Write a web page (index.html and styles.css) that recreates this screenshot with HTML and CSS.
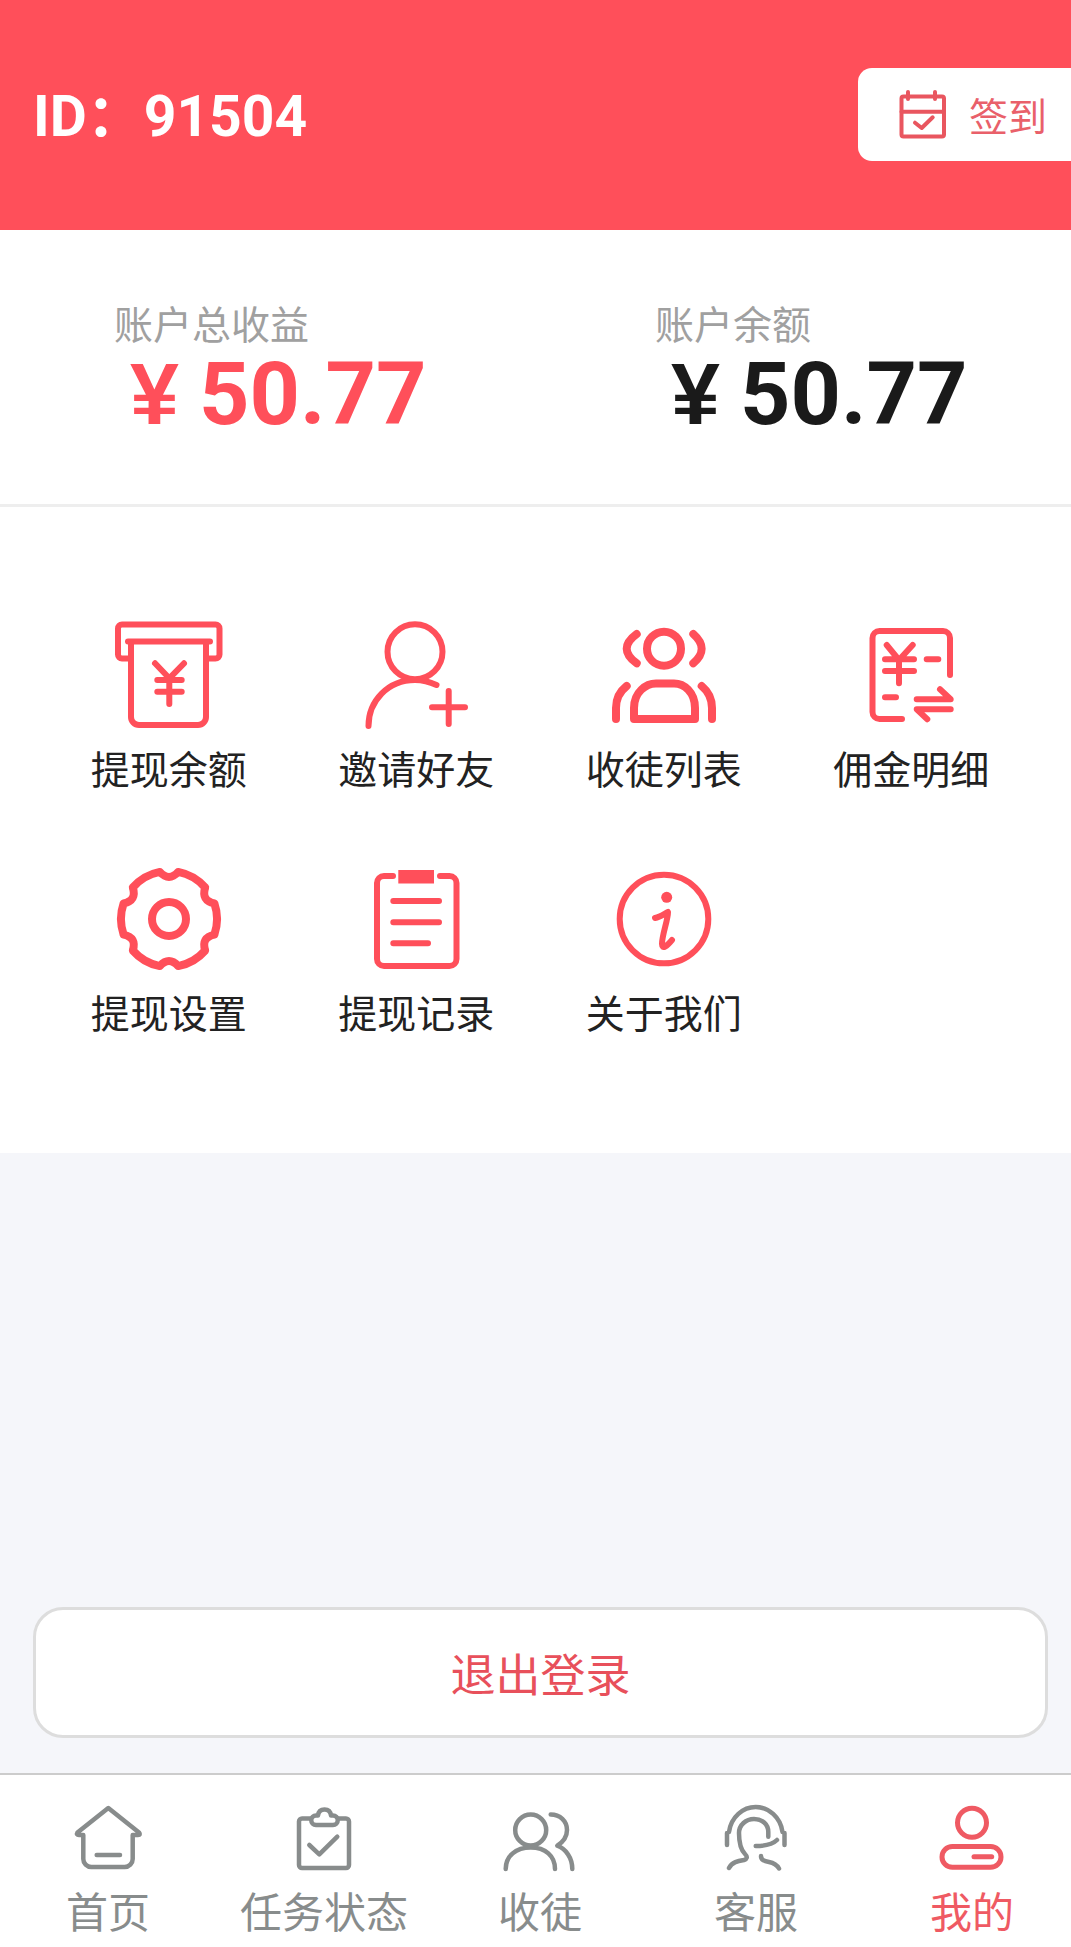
FILE: index.html
```html
<!DOCTYPE html>
<html lang="zh-CN">
<head>
    <meta charset="UTF-8">
    <meta name="viewport" content="width=device-width, initial-scale=1.0">
    <title>我的</title>
    <link rel="stylesheet" href="styles.css">
</head>
<body>
    <div class="page">
        <header class="header">
            <div class="user-id">ID：91504</div>
            <div class="sign-btn">
                <svg class="sign-icon" viewBox="0 0 52 52">
                    <rect x="4.5" y="6.5" width="42.5" height="40" rx="2"/>
                    <path d="M11 2v7M38 2v7M4.5 21.7H47M18 32.7l6.7 5.3 11-10.7"/>
                </svg>
                <span>签到</span>
            </div>
        </header>

        <section class="stats">
            <div class="stat">
                <div class="stat-label">账户总收益</div>
                <div class="stat-value red"><span class="yen">¥</span>50.77</div>
            </div>
            <div class="stat">
                <div class="stat-label">账户余额</div>
                <div class="stat-value"><span class="yen">¥</span>50.77</div>
            </div>
        </section>

        <section class="menu">
            <div class="menu-item">
                <svg class="menu-icon" viewBox="0 0 120 120">
                    <path d="M21 42.5H13a4 4 0 0 1-4-4V12.5a4 4 0 0 1 4-4H106.5a4 4 0 0 1 4 4V38.5a4 4 0 0 1-4 4H98"/>
                    <path d="M19 25.5H101M22 25.5V101a8 8 0 0 0 8 8H89a8 8 0 0 0 8-8V25.5"/>
                    <path d="M46 47.3l14.3 15 14.7-15M60.3 62.3V88M48.3 64H72.7M48.3 75.7H72.7"/>
                </svg>
                <div>提现余额</div>
            </div>
            <div class="menu-item">
                <svg class="menu-icon" viewBox="0 0 120 120">
                    <circle cx="59" cy="35.7" r="27.5"/>
                    <path d="M12.5 110C12.5 85 32 64 59 64C66 64 74 66 80.5 69"/>
                    <path d="M76 91.3H109M92.7 75V108"/>
                </svg>
                <div>邀请好友</div>
            </div>
            <div class="menu-item">
                <svg class="menu-icon thick" viewBox="0 0 120 120">
                    <circle cx="60" cy="32.7" r="17"/>
                    <path d="M32.7 18Q12.7 32.7 32.7 47.3M89.3 18Q106 32.7 89.3 47.3"/>
                    <path d="M30 103V92C30 76 42 67.5 52 67.5H70C80 67.5 91 76 91 92V103Z"/>
                    <path d="M22.7 70C15 76 12 84 12 92V103M97.7 70C105 76 108 84 108 92V103"/>
                </svg>
                <div>收徒列表</div>
            </div>
            <div class="menu-item">
                <svg class="menu-icon" viewBox="0 0 120 120">
                    <path d="M99 59V22a7 7 0 0 0-7-7H28.5a7 7 0 0 0-7 7V96a7 7 0 0 0 7 7H51"/>
                    <path d="M35.7 29L48 44L61.7 29M48 44V67.3M34 43.3H63M34 55H63"/>
                    <path d="M75.7 43.3H87.3M34 81.3H45"/>
                    <path d="M65.7 83.3H99.7L89 73.3M99.7 93.3H65.7L76.3 103.3"/>
                </svg>
                <div>佣金明细</div>
            </div>
            <div class="menu-item">
                <svg class="menu-icon gear" viewBox="0 1 120 120">
                    <path d="M105.4 44.4A48 48 0 0 1 105.4 75.6Q92 78.5 96.2 91.5A48 48 0 0 1 69.2 107.1Q60 97 50.8 107.1A48 48 0 0 1 23.8 91.5Q28 78.5 14.6 75.6A48 48 0 0 1 14.6 44.4Q28 41.5 23.8 28.5A48 48 0 0 1 50.8 12.9Q60 23 69.2 12.9A48 48 0 0 1 96.2 28.5Q92 41.5 105.4 44.4Z"/>
                    <circle cx="60" cy="60" r="17"/>
                </svg>
                <div>提现设置</div>
            </div>
            <div class="menu-item">
                <svg class="menu-icon" viewBox="0 0 120 120">
                    <path d="M37 16H28a7 7 0 0 0-7 7V99a7 7 0 0 0 7 7H93.5a7 7 0 0 0 7-7V23a7 7 0 0 0-7-7H84"/>
                    <rect class="solid" x="42.3" y="10" width="35.7" height="13.5"/>
                    <path d="M37.3 41H83M37.3 62.3H83M37.3 83.3H72"/>
                </svg>
                <div>提现记录</div>
            </div>
            <div class="menu-item">
                <svg class="menu-icon" viewBox="0 0 120 120">
                    <circle cx="60" cy="59" r="44.3"/>
                    <circle class="solid" cx="62.7" cy="37.3" r="5.5"/>
                    <path d="M51 58C56 57 60 54 64 52C64 60 58 75 58 84C58 90 63 86 68 80"/>
                </svg>
                <div>关于我们</div>
            </div>
        </section>

        <div class="spacer"></div>
        <div class="logout-btn">退出登录</div>

        <nav class="tabbar">
            <div class="tab">
                <svg class="tab-icon" viewBox="0 0 80 80">
                    <path d="M40.3 8L9.5 32.5Q8 35 11 35H15.3V59a8 8 0 0 0 8 8H56.7a8 8 0 0 0 8-8V35H70Q73 35 71 32.5Z"/>
                    <path d="M28.7 55H52"/>
                </svg>
                <span>首页</span>
            </div>
            <div class="tab">
                <svg class="tab-icon" viewBox="0 0 80 80">
                    <path d="M27 18.5H18a3 3 0 0 0-3 3V65a3 3 0 0 0 3 3H62a3 3 0 0 0 3-3V21.5a3 3 0 0 0-3-3H54"/>
                    <path d="M32 15.5H34C34.5 11 37 9.5 40.5 9.5S46.5 11 47 15.5H49a4.75 4.75 0 0 1 0 9.5H32a4.75 4.75 0 0 1 0-9.5Z"/>
                    <path d="M25.3 45L35.3 54.3L53.3 36.7"/>
                </svg>
                <span>任务状态</span>
            </div>
            <div class="tab">
                <svg class="tab-icon" viewBox="0 0 80 80">
                    <circle cx="30.7" cy="30" r="15.5"/>
                    <path d="M5.7 69C5.7 56 16 47.5 30.7 47.5S55 56 55 69"/>
                    <path d="M50.7 14.5C60 14.5 67 21 67 30C67 37 63 42 57.3 45.7C66 49 72.3 58 72.3 69"/>
                </svg>
                <span>收徒</span>
            </div>
            <div class="tab">
                <svg class="tab-icon" viewBox="0 0 80 80">
                    <path d="M11 45V33M13 32C15 17 27 7 39.7 7S64.5 17 66.5 32M68.5 33V45"/>
                    <path d="M52.3 36.7V32C52.3 24 46 19 38 19S23 25 23 33C23 42 25 50 29 54C32 57 31 59 28 60C22 61 16 62 13 68"/>
                    <path d="M39.7 46C48 46 56 45 61 40"/>
                    <path d="M45 56C45 60 48 61 53 62C58 63 61 65 63 68.5"/>
                </svg>
                <span>客服</span>
            </div>
            <div class="tab active">
                <svg class="tab-icon" viewBox="0 0 80 80">
                    <circle cx="40" cy="22.7" r="14.5"/>
                    <rect x="10" y="46.5" width="59" height="20.8" rx="10.4"/>
                    <path d="M42 56.7H59.7"/>
                </svg>
                <span>我的</span>
            </div>
        </nav>
    </div>
</body>
</html>
```

FILE: styles.css
```css
* {
    box-sizing: border-box;
}
body {
    margin: 0;
    font-family: Roboto, "Noto Sans CJK SC", sans-serif;
    background-color: #f5f6fa;
    color: #222;
}
.page {
    display: flex;
    flex-direction: column;
    min-height: 100vh;
    overflow: hidden;
}
svg {
    display: block;
    fill: none;
    stroke-linecap: round;
    stroke-linejoin: round;
}
.solid {
    fill: #ff4f5a;
    stroke: none;
}

/* header */
.header {
    height: 230px;
    background-color: #ff4f5a;
    display: flex;
    align-items: center;
    justify-content: space-between;
    padding-left: 33px;
}
.user-id {
    color: #fff;
    font-size: 57px;
    font-weight: 700;
    margin-bottom: 9px;
}
.sign-btn {
    width: 213px;
    height: 93px;
    margin-bottom: 2px;
    background-color: #fff;
    border-radius: 14px 0 0 14px;
    display: flex;
    align-items: center;
    gap: 20px;
    padding-left: 39px;
    color: #e9606a;
    font-size: 39px;
}
.sign-icon {
    width: 52px;
    height: 52px;
    margin-top: 3px;
    stroke: #e9565f;
    stroke-width: 4;
}

/* stats */
.stats {
    background-color: #fff;
    height: 277px;
    border-bottom: 3px solid #eee;
    display: grid;
    grid-template-columns: 541px 1fr;
    padding: 72px 0 0 114px;
}
.stat-label {
    font-size: 39px;
    line-height: 48px;
    color: #a0a0a0;
}
.stat-value {
    font-size: 88px;
    font-weight: 700;
    line-height: 88px;
    margin-left: 16px;
    color: #1a1a1a;
}
.stat-value.red {
    color: #ff4f5a;
}
.yen {
    font-family: "Liberation Sans", sans-serif;
    margin-right: 20px;
}

/* menu */
.menu {
    background-color: #fff;
    height: 646px;
    display: grid;
    grid-template-columns: repeat(4, 247.5px);
    grid-auto-rows: 180px;
    row-gap: 64px;
    padding: 109px 0 0 45px;
}
.menu-item {
    display: flex;
    flex-direction: column;
    align-items: center;
    gap: 10px;
    font-size: 39px;
    line-height: 50px;
}
.menu-icon {
    width: 120px;
    height: 120px;
    stroke: #ff4f5a;
    stroke-width: 6;
}
.menu-icon.thick {
    stroke-width: 8;
}
.menu-icon.gear {
    stroke-width: 8;
}

/* logout */
.spacer {
    flex: 1;
}
.logout-btn {
    height: 131px;
    margin: 0 23px 35px 33px;
    background-color: #fff;
    border: 3px solid #ddd;
    border-radius: 30px;
    display: flex;
    align-items: center;
    justify-content: center;
    font-size: 45px;
    color: #e8505b;
}

/* tabbar */
.tabbar {
    height: 174px;
    background-color: #fff;
    border-top: 2px solid #ccc;
    display: grid;
    grid-template-columns: repeat(5, 216px);
    padding-top: 25px;
}
.tab {
    display: flex;
    flex-direction: column;
    align-items: center;
    gap: 9px;
    font-size: 42px;
    line-height: 50px;
    color: #888c8c;
}
.tab-icon {
    width: 80px;
    height: 80px;
    stroke: #888c8c;
    stroke-width: 4.5;
}
.tab.active {
    color: #ef5a63;
}
.tab.active .tab-icon {
    stroke: #ef5a63;
    stroke-width: 5;
}
```
